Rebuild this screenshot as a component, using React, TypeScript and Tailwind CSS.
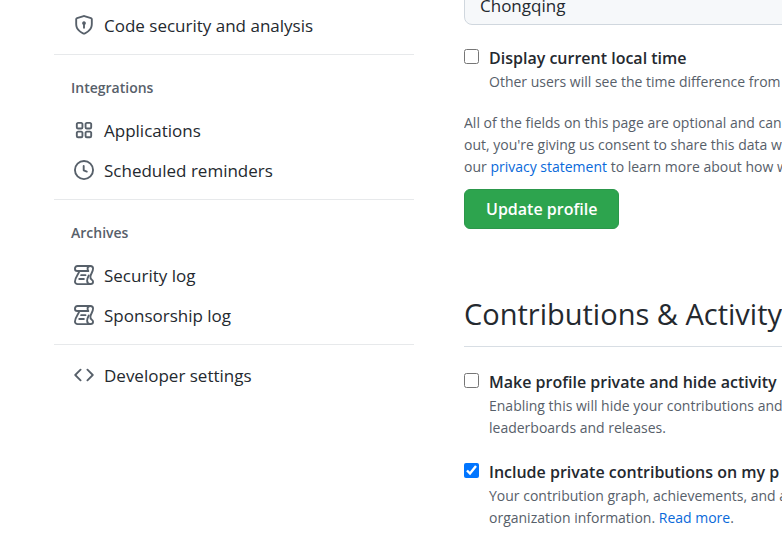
import type { ReactNode } from "react";

const icons = {
  shield: (
    <path d="m8.533.133 5.25 1.68A1.75 1.75 0 0 1 15 3.48V7c0 1.566-.32 3.182-1.303 4.682-.983 1.498-2.585 2.813-5.032 3.855a1.697 1.697 0 0 1-1.33 0c-2.447-1.042-4.049-2.357-5.032-3.855C1.32 10.182 1 8.566 1 7V3.48a1.755 1.755 0 0 1 1.217-1.667l5.25-1.68a1.748 1.748 0 0 1 1.066 0Zm-.61 1.429.001.001-5.25 1.68a.251.251 0 0 0-.174.237V7c0 1.36.275 2.666 1.057 3.859.784 1.194 2.121 2.342 4.366 3.298a.196.196 0 0 0 .154 0c2.245-.957 3.582-2.103 4.366-3.297C13.225 9.666 13.5 8.358 13.5 7V3.48a.25.25 0 0 0-.174-.238l-5.25-1.68a.25.25 0 0 0-.153 0ZM9.5 6.5c0 .536-.286 1.032-.75 1.3v2.45a.75.75 0 0 1-1.5 0V7.8A1.5 1.5 0 1 1 9.5 6.5Z" />
  ),
  apps: (
    <path d="M1.5 3.25c0-.966.784-1.75 1.75-1.75h2.5c.966 0 1.75.784 1.75 1.75v2.5A1.75 1.75 0 0 1 5.75 7.5h-2.5A1.75 1.75 0 0 1 1.5 5.75Zm7 0c0-.966.784-1.75 1.75-1.75h2.5c.966 0 1.75.784 1.75 1.75v2.5a1.75 1.75 0 0 1-1.75 1.75h-2.5A1.75 1.75 0 0 1 8.5 5.75Zm-7 7c0-.966.784-1.75 1.75-1.75h2.5c.966 0 1.75.784 1.75 1.75v2.5a1.75 1.75 0 0 1-1.75 1.75h-2.5a1.75 1.75 0 0 1-1.75-1.75Zm7 0c0-.966.784-1.75 1.75-1.75h2.5c.966 0 1.75.784 1.75 1.75v2.5a1.75 1.75 0 0 1-1.75 1.75h-2.5a1.75 1.75 0 0 1-1.75-1.75ZM3.25 3a.25.25 0 0 0-.25.25v2.5c0 .138.112.25.25.25h2.5A.25.25 0 0 0 6 5.75v-2.5A.25.25 0 0 0 5.75 3Zm7 0a.25.25 0 0 0-.25.25v2.5c0 .138.112.25.25.25h2.5a.25.25 0 0 0 .25-.25v-2.5a.25.25 0 0 0-.25-.25Zm-7 7a.25.25 0 0 0-.25.25v2.5c0 .138.112.25.25.25h2.5a.25.25 0 0 0 .25-.25v-2.5a.25.25 0 0 0-.25-.25Zm7 0a.25.25 0 0 0-.25.25v2.5c0 .138.112.25.25.25h2.5a.25.25 0 0 0 .25-.25v-2.5a.25.25 0 0 0-.25-.25Z" />
  ),
  clock: (
    <path d="M8 0a8 8 0 1 1 0 16A8 8 0 0 1 8 0ZM1.5 8a6.5 6.5 0 1 0 13 0 6.5 6.5 0 0 0-13 0Zm7-3.25v2.992l2.028.812a.75.75 0 0 1-.557 1.392l-2.5-1A.751.751 0 0 1 7 8.25v-3.5a.75.75 0 0 1 1.5 0Z" />
  ),
  log: (
    <g fill="none" stroke="#57606a" strokeWidth="1.5" strokeLinecap="round" strokeLinejoin="round">
      <path d="M11.4 4.75H2.6C1.4 4.75.75 3.9.75 2.9c0-1.2.9-2.15 2.1-2.15h10.2c1.2 0 2.2.9 2.2 2.1 0 2.4-1.7 4-2.1 6.2-.2 1.3.2 2 1.1 2.7.7.5 1 1.1 1 1.6 0 1.1-.9 1.9-2.1 1.9H2.9c-1.2 0-2.15-.9-2.15-2.1 0-2.9 2.6-5.3 3.55-8.1" />
      <path d="M13.05.75c-1.4 0-2.2.9-2.2 2.1 0 .8.2 1.4.55 1.9M13.1 15.25c-1.6 0-2.6-1.1-2.6-2.6 0-1.6.6-3 1.3-4.3M5.7 8.1h3.5M4.2 11.2h3.7" />
    </g>
  ),
  code: (
    <path d="m11.28 3.22 4.25 4.25a.75.75 0 0 1 0 1.06l-4.25 4.25a.749.749 0 0 1-1.275-.326.749.749 0 0 1 .215-.734L13.94 8l-3.72-3.72a.749.749 0 0 1 .326-1.275.749.749 0 0 1 .734.215Zm-6.56 0a.751.751 0 0 1 1.042.018.751.751 0 0 1 .018 1.042L2.06 8l3.72 3.72a.749.749 0 0 1-.326 1.275.749.749 0 0 1-.734-.215L.47 8.53a.75.75 0 0 1 0-1.06Z" />
  ),
};

function NavItem({ icon, children }: { icon: keyof typeof icons; children: ReactNode }) {
  return (
    <li>
      <a href="#" className="flex h-10 items-center gap-2.5 pl-5 text-[17px] text-[#24292f]">
        <svg viewBox="0 0 16 16" className="size-5 shrink-0 fill-[#57606a]" aria-hidden="true">
          {icons[icon]}
        </svg>
        <span className="pt-px">{children}</span>
      </a>
    </li>
  );
}

function NavGroup({ title, children }: { title?: string; children: ReactNode }) {
  return (
    <section className="mt-[9px] border-t border-[#e7e9eb]">
      {title ? (
        <h3 className="mt-2.5 flex h-[45px] items-center pl-[17px] text-sm font-semibold text-[#57606a]">
          {title}
        </h3>
      ) : (
        <div className="h-2.5" />
      )}
      <ul>{children}</ul>
    </section>
  );
}

function CheckOption({
  id,
  label,
  checked,
  children,
}: {
  id: string;
  label: string;
  checked?: boolean;
  children: ReactNode;
}) {
  return (
    <div className="flex gap-2.5 whitespace-nowrap">
      <input
        id={id}
        type="checkbox"
        defaultChecked={checked}
        className="mt-1 size-[15px] shrink-0 accent-[#0075ff]"
      />
      <div>
        <label htmlFor={id} className="block text-base leading-[26px] font-semibold text-[#24292f]">
          {label}
        </label>
        <p className="text-sm leading-[22px] text-[#57606a]">{children}</p>
      </div>
    </div>
  );
}

export default function App() {
  return (
    <div className="flex gap-[50px] overflow-hidden bg-white pl-[54px] font-['Open_Sans','Noto_Sans',sans-serif]">
      <nav className="w-[360px] shrink-0 pt-[5px]" aria-label="Settings">
        <ul>
          <NavItem icon="shield">Code security and analysis</NavItem>
        </ul>
        <NavGroup title="Integrations">
          <NavItem icon="apps">Applications</NavItem>
          <NavItem icon="clock">Scheduled reminders</NavItem>
        </NavGroup>
        <NavGroup title="Archives">
          <NavItem icon="log">Security log</NavItem>
          <NavItem icon="log">Sponsorship log</NavItem>
        </NavGroup>
        <NavGroup>
          <NavItem icon="code">Developer settings</NavItem>
        </NavGroup>
      </nav>

      <main className="min-w-0 flex-1 overflow-hidden pb-2">
        <input
          type="text"
          aria-label="Location"
          defaultValue="Chongqing"
          className="-mt-[15px] block h-10 w-[550px] rounded-lg border border-[#d0d7de] bg-[#f6f8fa] px-[15px] text-[17px] text-[#24292f]"
        />
        <div className="mt-5">
          <CheckOption id="local-time" label="Display current local time">
            Other users will see the time difference from
          </CheckOption>
        </div>
        <p className="mt-[19px] text-sm leading-[22px] whitespace-nowrap text-[#57606a]">
          All of the fields on this page are optional and can
          <br />
          out, you're giving us consent to share this data w
          <br />
          our{" "}
          <a href="#" className="text-[#0969da]">
            privacy statement
          </a>{" "}
          to learn more about how w
        </p>
        <button
          type="button"
          className="mt-[11px] h-10 rounded-md border border-[#2c974b] bg-[#2da44e] px-[21px] text-base font-semibold text-white"
        >
          Update profile
        </button>

        <h2 className="mt-[63px] border-b border-[#d8dee4] pb-2.5 text-[29px] leading-[44px] whitespace-nowrap text-[#24292f]">
          Contributions &amp; Activity
        </h2>
        <div className="mt-[22px] flex flex-col gap-5">
          <CheckOption id="private-profile" label="Make profile private and hide activity">
            Enabling this will hide your contributions and
            <br />
            leaderboards and releases.
          </CheckOption>
          <CheckOption id="private-contributions" label="Include private contributions on my p" checked>
            Your contribution graph, achievements, and a
            <br />
            organization information.{" "}
            <a href="#" className="text-[#0969da]">
              Read more
            </a>
            .
          </CheckOption>
        </div>
      </main>
    </div>
  );
}
